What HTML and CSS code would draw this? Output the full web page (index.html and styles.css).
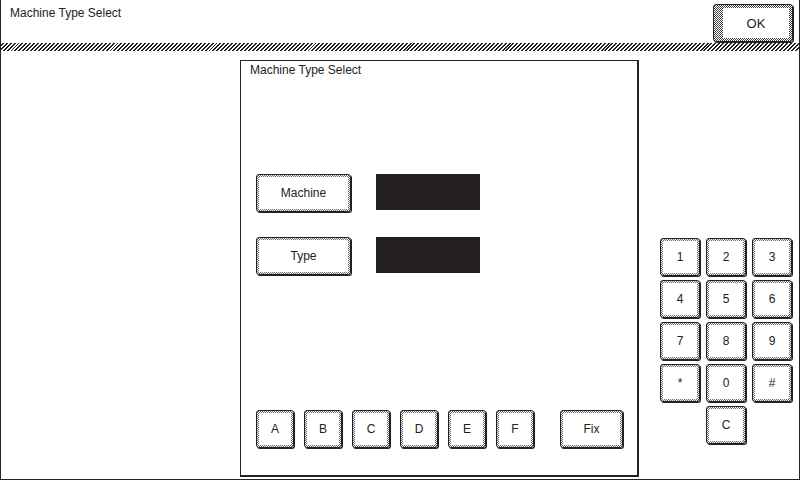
FILE: index.html
```html
<!DOCTYPE html>
<html lang="en">
<head>
<meta charset="UTF-8">
<meta name="viewport" content="width=device-width, initial-scale=1.0">
<title>Machine Type Select</title>
<link rel="stylesheet" href="styles.css">
</head>
<body>
<div class="header">
    <p class="screen-title">Machine Type Select</p>
    <button class="key ok-key"><span>OK</span></button>
</div>
<div class="hatch"></div>

<div class="main">
    <div class="panel">
        <p class="panel-title">Machine Type Select</p>

        <div class="field-row">
            <button class="key field-key"><span>Machine</span></button>
            <div class="field-value"></div>
        </div>
        <div class="field-row second">
            <button class="key field-key"><span>Type</span></button>
            <div class="field-value"></div>
        </div>

        <div class="letter-row">
            <button class="key letter-key"><span>A</span></button>
            <button class="key letter-key"><span>B</span></button>
            <button class="key letter-key"><span>C</span></button>
            <button class="key letter-key"><span>D</span></button>
            <button class="key letter-key"><span>E</span></button>
            <button class="key letter-key"><span>F</span></button>
            <button class="key fix-key"><span>Fix</span></button>
        </div>
    </div>

    <div class="keypad">
        <button class="key"><span>1</span></button>
        <button class="key"><span>2</span></button>
        <button class="key"><span>3</span></button>
        <button class="key"><span>4</span></button>
        <button class="key"><span>5</span></button>
        <button class="key"><span>6</span></button>
        <button class="key"><span>7</span></button>
        <button class="key"><span>8</span></button>
        <button class="key"><span>9</span></button>
        <button class="key"><span>*</span></button>
        <button class="key"><span>0</span></button>
        <button class="key"><span>#</span></button>
        <button class="key clear-key"><span>C</span></button>
    </div>
</div>
</body>
</html>
```

FILE: styles.css
```css
* {
    box-sizing: border-box;
}
body {
    margin: 0;
    width: 800px;
    height: 480px;
    background: #fff;
    color: #222;
    font-family: "Liberation Sans", Arial, sans-serif;
    font-size: 12px;
    border: 1px solid #222;
    border-top: none;
    overflow: hidden;
}
p {
    margin: 0;
}

.header {
    height: 43px;
    display: flex;
    justify-content: space-between;
    align-items: flex-start;
    padding: 4px 6px 0 9px;
}
.screen-title {
    line-height: 14px;
    padding-top: 2px;
}

/* striped strip under the title bar */
.hatch {
    height: 8px;
    margin: 0 -1px;
    background: repeating-linear-gradient(-45deg, #222 0 1.4px, #fff 1.4px 2.8px);
}

/* buttons: dark frame, dithered ring, white face */
.key {
    position: relative;
    padding: 2px;
    border: 1px solid #222;
    border-radius: 3px;
    background: repeating-conic-gradient(#666 0 25%, #fff 0 50%) 0 0 / 2px 2px;
    box-shadow: 1px 1px 0 #222;
    font: inherit;
    color: #222;
    cursor: pointer;
}
.key span {
    display: flex;
    width: 100%;
    height: 100%;
    align-items: center;
    justify-content: center;
    background: #fff;
}

.ok-key {
    width: 80px;
    height: 38px;
    padding: 3px 3px 3px 9px;
    background: repeating-conic-gradient(#444 0 25%, #fff 0 50%) 0 0 / 2px 2px;
}
.ok-key span {
    font-size: 13px;
}

.main {
    display: flex;
    align-items: flex-start;
}

.panel {
    margin: 9px 0 0 239px;
    width: 399px;
    height: 417px;
    border: 1px solid #222;
    border-width: 1px 2px 2px 1px;
    display: flex;
    flex-direction: column;
    padding: 2px 13px 27px 15px;
}
.panel-title {
    line-height: 14px;
    margin-left: -6px;
}

.field-row {
    display: flex;
    align-items: flex-start;
    gap: 25px;
    margin-top: 97px;
}
.field-row.second {
    margin-top: 25px;
}
.field-key {
    width: 95px;
    height: 38px;
}
.field-value {
    width: 104px;
    height: 36px;
    background: #231f20;
}

.letter-row {
    margin-top: auto;
    display: flex;
    gap: 10px;
}
.letter-key {
    width: 38px;
    height: 38px;
}
.fix-key {
    width: 63px;
    height: 38px;
    margin-left: 16px;
}

.keypad {
    margin: 187px 0 0 21px;
    display: grid;
    grid-template-columns: repeat(3, 40px);
    grid-auto-rows: 38px;
    column-gap: 6px;
    row-gap: 4px;
}
.clear-key {
    grid-column: 2;
}
```
